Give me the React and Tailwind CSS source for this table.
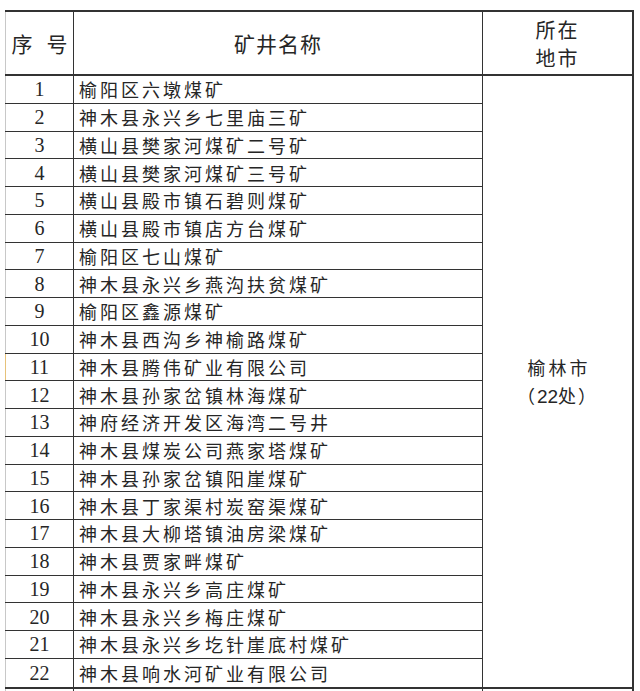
const MINES = [
  '榆阳区六墩煤矿',
  '神木县永兴乡七里庙三矿',
  '横山县樊家河煤矿二号矿',
  '横山县樊家河煤矿三号矿',
  '横山县殿市镇石碧则煤矿',
  '横山县殿市镇店方台煤矿',
  '榆阳区七山煤矿',
  '神木县永兴乡燕沟扶贫煤矿',
  '榆阳区鑫源煤矿',
  '神木县西沟乡神榆路煤矿',
  '神木县腾伟矿业有限公司',
  '神木县孙家岔镇林海煤矿',
  '神府经济开发区海湾二号井',
  '神木县煤炭公司燕家塔煤矿',
  '神木县孙家岔镇阳崖煤矿',
  '神木县丁家渠村炭窑渠煤矿',
  '神木县大柳塔镇油房梁煤矿',
  '神木县贾家畔煤矿',
  '神木县永兴乡高庄煤矿',
  '神木县永兴乡梅庄煤矿',
  '神木县永兴乡圪针崖底村煤矿',
  '神木县响水河矿业有限公司',
]

const cjk = "font-['Noto_Sans_CJK_SC',sans-serif]"

export default function App() {
  return (
    <div className={`w-[640px] h-[691px] overflow-hidden bg-white pl-[5px] pt-[10px] text-[#262626] ${cjk}`}>
      <div className="w-[629px] border-t-2 border-r-2 border-[#333]">
        {/* header */}
        <div className="flex h-[64px] border-b-2 border-[#333]">
          <div className="w-[69px] border-l border-l-[#c8c8c8] border-r border-[#333] flex items-center justify-center gap-[14px] text-[21px] pt-[2px]">
            <span>序</span>
            <span>号</span>
          </div>
          <div className="w-[409px] border-r border-[#333] flex items-center justify-center text-[21px] tracking-[1px] pt-[2px]">
            矿井名称
          </div>
          <div className="flex-1 flex flex-col items-center justify-center text-[20px] leading-[28px] tracking-[2px] pt-[1px]">
            <span>所在</span>
            <span>地市</span>
          </div>
        </div>

        {/* body */}
        <div className="flex border-b-2 border-[#333]">
          <div className="w-[478px] flex flex-col">
            {MINES.map((name, i) => (
              <div
                key={i}
                className={`flex h-[27.75px] ${i < MINES.length - 1 ? 'border-b border-[#333]' : ''}`}
              >
                <div
                  className={`w-[69px] border-l border-r border-r-[#333] flex items-center justify-center font-['Liberation_Serif',serif] text-[20px] ${
                    i === 10 ? 'border-l-[#e6c27a]' : 'border-l-[#c8c8c8]'
                  }`}
                >
                  {i + 1}
                </div>
                <div className="flex-1 border-r border-[#333] flex items-center pl-[5px] text-[18px] tracking-[3px] leading-none">
                  {name}
                </div>
              </div>
            ))}
          </div>
          <div className="flex-1 flex flex-col items-center justify-center text-[18px] leading-[28px] pt-[2px]">
            <span className="tracking-[3px] pl-[3px]">榆林市</span>
            <span className="tracking-[2px]">
              （<span className="font-['Liberation_Sans',sans-serif] text-[19px] tracking-[0px]">22</span>处）
            </span>
          </div>
        </div>

        {/* partial next row */}
        <div className="flex h-[20px]">
          <div className="w-[69px] border-l border-l-[#c8c8c8] border-r border-[#333]"></div>
          <div className="w-[409px] border-r border-[#333]"></div>
          <div className="flex-1"></div>
        </div>
      </div>
    </div>
  )
}
